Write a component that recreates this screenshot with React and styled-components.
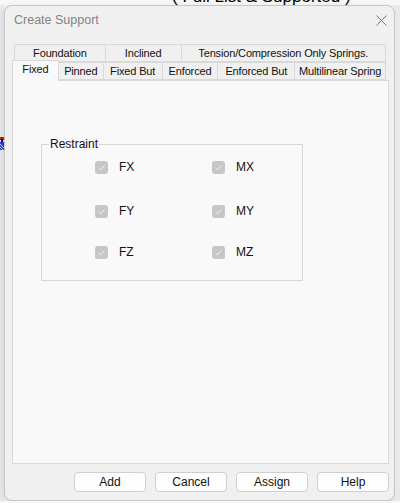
import styled, { createGlobalStyle } from 'styled-components'

const GlobalStyle = createGlobalStyle`
  html, body {
    margin: 0;
    padding: 0;
    background: #f2f2f2;
    overflow: hidden;
  }
  * { box-sizing: border-box; }
`

const Page = styled.div`
  width: 400px;
  height: 503px;
  display: flex;
  flex-direction: column;
  font-family: "Liberation Sans", Arial, sans-serif;
  font-size: 12px;
  color: #111;
`

const TopStrip = styled.div`
  height: 5px;
  flex: none;
  overflow: hidden;
  display: flex;
  align-items: flex-end;
  background: #f7f7f7;
  padding-left: 172px;
  font-size: 17px;
  line-height: 16px;
  color: #000;
  white-space: nowrap;
`

const Middle = styled.div`
  height: 496px;
  flex: none;
  display: flex;
`

const SideStrip = styled.div`
  width: ${p => p.$w}px;
  flex: ${p => (p.$grow ? 1 : 'none')};
  background: #e9e9e9;
  padding-top: 132px;
`

const BottomStrip = styled.div`
  flex: 1;
  background: #f7f7f7;
`

const Dialog = styled.div`
  width: 391px;
  flex: none;
  display: flex;
  flex-direction: column;
  background: #f0f0f0;
  border: 1px solid #c6c6c6;
  border-radius: 8px;
  box-shadow: 0 2px 6px rgba(0, 0, 0, 0.12);
  padding: 0 5px 8px 7px;
`

const TitleBar = styled.div`
  height: 29px;
  display: flex;
  align-items: center;
  justify-content: space-between;
  padding: 0 2px 1px 2px;
  color: #848484;
  font-size: 12.5px;
`

const CloseButton = styled.div`
  width: 12px;
  height: 12px;
  display: flex;
  align-items: center;
  justify-content: center;
`

const TabRow = styled.div`
  display: flex;
  align-items: flex-end;
  height: 18px;
  margin-left: ${p => p.$indent}px;
  margin-top: ${p => p.$mt || 0}px;
  width: ${p => p.$width}px;
`

const Tab = styled.div`
  width: ${p => p.$w}px;
  height: ${p => (p.$active ? 21 : 18)}px;
  margin-left: ${p => (p.$first ? 0 : -1)}px;
  margin-bottom: ${p => (p.$active ? -1 : 0)}px;
  display: flex;
  align-items: center;
  justify-content: center;
  padding-bottom: ${p => (p.$active ? 4 : 0)}px;
  border: 1px solid #d9d9d9;
  border-bottom: ${p => (p.$active ? 'none' : '1px solid #d9d9d9')};
  background: ${p => (p.$active ? '#f9f9f9' : '#f0f0f0')};
  position: relative;
  z-index: ${p => (p.$active ? 2 : 0)};
  white-space: nowrap;
  font-size: 11px;
  letter-spacing: -0.15px;
  color: #111;
`

const Panel = styled.div`
  flex: 1;
  background: #f9f9f9;
  border: 1px solid #d9d9d9;
  padding: 56px 0 0 28px;
  position: relative;
  z-index: 1;
`

const Group = styled.fieldset`
  width: 262px;
  height: 144px;
  margin: 0;
  padding: 0;
  border: 1px solid #d6d6d6;
  border-radius: 0;
`

const Legend = styled.legend`
  margin-left: 7px;
  padding: 0 1px;
  font-size: 12px;
  color: #111;
`

const Grid = styled.div`
  display: flex;
  flex-direction: column;
  padding: 9px 0 0 53px;
`

const CheckRow = styled.div`
  display: grid;
  grid-template-columns: 117px 60px;
  height: 14px;
  margin-top: ${p => p.$mt}px;
`

const CheckItem = styled.label`
  display: flex;
  align-items: center;
  gap: 11px;
  color: #111;
  font-size: 12px;
`

const Box = styled.span`
  width: 13px;
  height: 13px;
  border-radius: 3px;
  background: #c6c6c6;
  display: flex;
  align-items: center;
  justify-content: center;
  flex: none;
`

const ButtonRow = styled.div`
  display: flex;
  justify-content: flex-end;
  gap: 9px;
  margin-top: 8px;
`

const Button = styled.button`
  width: 72px;
  height: 20px;
  padding: 0;
  border: 1px solid #d0d0d0;
  border-radius: 4px;
  background: #fdfdfd;
  font-family: "Liberation Sans", Arial, sans-serif;
  font-size: 12px;
  color: #111;
`

function Check({ label }) {
  return (
    <CheckItem>
      <Box>
        <svg width="9" height="9" viewBox="0 0 9 9">
          <path d="M1.5 4.8 L3.6 6.8 L7.6 2.4" fill="none" stroke="#f4f4f4" strokeWidth="1" />
        </svg>
      </Box>
      {label}
    </CheckItem>
  )
}

const backTabs = [
  ['Foundation', 92],
  ['Inclined', 77],
  ['Tension/Compression Only Springs.', 206],
]

const frontTabs = [
  ['Fixed', 47],
  ['Pinned', 46],
  ['Fixed But', 60],
  ['Enforced', 57],
  ['Enforced But', 78],
  ['Multilinear Spring', 92],
]

const rows = [
  [['FX', 'MX'], 0],
  [['FY', 'MY'], 30],
  [['FZ', 'MZ'], 27],
]

export default function App() {
  return (
    <>
      <GlobalStyle />
      <Page>
        <TopStrip>( Full List &amp; Supported )</TopStrip>
        <Middle>
          <SideStrip $w={4}>
            <svg width="4" height="13" viewBox="0 0 4 13">
              <rect x="0" y="0" width="4" height="3" fill="#e01010" />
              <rect x="1" y="2" width="2" height="3" fill="#111" />
              <rect x="0" y="5" width="4" height="8" fill="#2040e0" />
              <path d="M0 7 L4 11 M0 10 L3 13" stroke="#fff" strokeWidth="0.8" />
            </svg>
          </SideStrip>
          <Dialog>
            <TitleBar>
              <span>Create Support</span>
              <CloseButton>
                <svg width="11" height="11" viewBox="0 0 11 11">
                  <path d="M0.5 0.5 L10.5 10.5 M10.5 0.5 L0.5 10.5" stroke="#7a7a7a" strokeWidth="1" />
                </svg>
              </CloseButton>
            </TitleBar>
            <TabRow $indent={2} $mt={9} $width={372}>
              {backTabs.map(([t, w], i) => (
                <Tab key={t} $w={w} $first={i === 0}>{t}</Tab>
              ))}
            </TabRow>
            <TabRow $indent={0} $width={374}>
              {frontTabs.map(([t, w], i) => (
                <Tab key={t} $w={w} $first={i === 0} $active={i === 0}>{t}</Tab>
              ))}
            </TabRow>
            <Panel>
              <Group>
                <Legend>Restraint</Legend>
                <Grid>
                  {rows.map(([pair, mt]) => (
                    <CheckRow key={pair[0]} $mt={mt}>
                      <Check label={pair[0]} />
                      <Check label={pair[1]} />
                    </CheckRow>
                  ))}
                </Grid>
              </Group>
            </Panel>
            <ButtonRow>
              <Button>Add</Button>
              <Button>Cancel</Button>
              <Button>Assign</Button>
              <Button>Help</Button>
            </ButtonRow>
          </Dialog>
          <SideStrip $grow />
        </Middle>
        <BottomStrip />
      </Page>
    </>
  )
}
